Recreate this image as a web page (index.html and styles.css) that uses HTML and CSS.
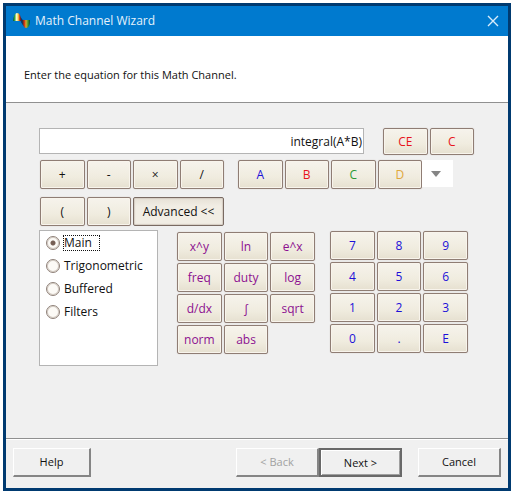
FILE: index.html
```html
<!DOCTYPE html>
<html lang="en">
<head>
<meta charset="utf-8">
<meta name="viewport" content="width=device-width, initial-scale=1">
<title>Math Channel Wizard</title>
<link rel="stylesheet" href="styles.css">
</head>
<body>
<div class="window">
  <header class="titlebar">
    <svg class="logo" viewBox="0 0 18 18" aria-hidden="true">
      <defs>
        <linearGradient id="bands">
          <stop offset="0" stop-color="#123c34"/>
          <stop offset=".2" stop-color="#2fa53c"/>
          <stop offset=".45" stop-color="#fffbd8"/>
          <stop offset=".65" stop-color="#f0d040"/>
          <stop offset=".85" stop-color="#c82418"/>
          <stop offset="1" stop-color="#4a1c28"/>
        </linearGradient>
        <linearGradient id="bands2">
          <stop offset="0" stop-color="#1a2c34"/>
          <stop offset=".3" stop-color="#d03418"/>
          <stop offset=".5" stop-color="#d8a830"/>
          <stop offset=".75" stop-color="#3c9a30"/>
          <stop offset="1" stop-color="#10402c"/>
        </linearGradient>
      </defs>
      <path d="M7 6Q9 8 9 10L11 13" fill="none" stroke="#0c3468" stroke-width="2"/>
      <path d="M0 9Q1 1 4 1Q8 1 8 9Z" fill="url(#bands)"/>
      <path d="M9 8H17Q17 16 13 16Q10 16 9 8Z" fill="url(#bands2)"/>
    </svg>
    <h1 class="title">Math Channel Wizard</h1>
    <button class="close" type="button" aria-label="Close">
      <svg viewBox="0 0 12 12" aria-hidden="true"><path d="M1 1L11 11M11 1L1 11"/></svg>
    </button>
  </header>
  <div class="intro"><label for="equation">Enter the equation for this Math Channel.</label></div>
  <main class="content">
    <div class="row entry">
      <input id="equation" class="equation" type="text" value="integral(A*B)">
      <div class="keys pair">
        <button type="button" class="key red">CE</button>
        <button type="button" class="key red">C</button>
      </div>
    </div>
    <div class="row operators">
      <div class="keys four">
        <button type="button" class="key">+</button>
        <button type="button" class="key">-</button>
        <button type="button" class="key">×</button>
        <button type="button" class="key">/</button>
      </div>
      <div class="channels">
        <div class="keys four">
          <button type="button" class="key blue">A</button>
          <button type="button" class="key red">B</button>
          <button type="button" class="key green">C</button>
          <button type="button" class="key gold">D</button>
        </div>
        <button type="button" class="more" aria-label="More channels">
          <svg viewBox="0 0 10 6" aria-hidden="true"><path d="M0 0H10L5 6Z"/></svg>
        </button>
      </div>
    </div>
    <div class="row brackets">
      <div class="keys four">
        <button type="button" class="key">(</button>
        <button type="button" class="key">)</button>
        <button type="button" class="key pressed">Advanced &lt;&lt;</button>
      </div>
    </div>
    <div class="row pads">
      <div class="groups" role="radiogroup" aria-label="Function group">
        <label class="option"><input type="radio" name="group" checked><span class="focused">Main</span></label>
        <label class="option"><input type="radio" name="group"><span>Trigonometric</span></label>
        <label class="option"><input type="radio" name="group"><span>Buffered</span></label>
        <label class="option"><input type="radio" name="group"><span>Filters</span></label>
      </div>
      <div class="keys three functions">
        <button type="button" class="key">x^y</button>
        <button type="button" class="key">ln</button>
        <button type="button" class="key">e^x</button>
        <button type="button" class="key">freq</button>
        <button type="button" class="key">duty</button>
        <button type="button" class="key">log</button>
        <button type="button" class="key">d/dx</button>
        <button type="button" class="key">∫</button>
        <button type="button" class="key">sqrt</button>
        <button type="button" class="key">norm</button>
        <button type="button" class="key">abs</button>
      </div>
      <div class="keys three digits">
        <button type="button" class="key">7</button>
        <button type="button" class="key">8</button>
        <button type="button" class="key">9</button>
        <button type="button" class="key">4</button>
        <button type="button" class="key">5</button>
        <button type="button" class="key">6</button>
        <button type="button" class="key">1</button>
        <button type="button" class="key">2</button>
        <button type="button" class="key">3</button>
        <button type="button" class="key">0</button>
        <button type="button" class="key">.</button>
        <button type="button" class="key">E</button>
      </div>
    </div>
  </main>
  <footer class="actions">
    <button type="button" class="action help">Help</button>
    <button type="button" class="action" disabled>&lt; Back</button>
    <button type="button" class="action default">Next &gt;</button>
    <button type="button" class="action cancel">Cancel</button>
  </footer>
</div>
</body>
</html>
```
FILE: styles.css
```css
* {
  box-sizing: border-box;
}

body {
  margin: 0;
  min-height: 100vh;
  padding: 3px 4px 6px 3px;
  display: flex;
  background: #fff;
  color: #111;
  font: 12px/16px "Open Sans", "Noto Sans", sans-serif;
}

button,
input {
  font: inherit;
  color: inherit;
  margin: 0;
}

.window {
  flex: 1;
  display: flex;
  flex-direction: column;
  border: 3px solid #003a70;
  background: #f0f0f0;
}

.titlebar {
  display: flex;
  align-items: center;
  height: 30px;
  padding: 0 7px;
  background: #007acf;
  color: #e4f1fb;
}

.logo {
  width: 18px;
  height: 18px;
  margin-right: 4px;
}

.title {
  flex: 1;
  margin: 0;
  font-size: 12px;
  font-weight: 400;
}

.close {
  display: flex;
  padding: 2px;
  border: 0;
  background: none;
}

.close svg {
  width: 12px;
  height: 12px;
  fill: none;
  stroke: #d8ecfa;
  stroke-width: 1.4;
}

.intro {
  height: 67px;
  padding: 31px 18px 0;
  border-bottom: 1px solid #909090;
  background: #fff;
  font-size: 11px;
}

.content {
  flex: 1;
  padding: 25px 34px 32px 33px;
}

.row {
  display: flex;
}

.entry {
  gap: 19px;
}

.equation {
  flex: 1;
  min-width: 0;
  height: 26px;
  padding: 0 1px;
  border: 1px solid #b4b4b4;
  background: #fff;
  text-align: right;
}

.keys {
  display: grid;
  grid-auto-rows: 29px;
  gap: 2px;
}

.pair {
  width: 91px;
  grid-template-columns: repeat(2, 1fr);
  grid-auto-rows: 27px;
}

.four {
  width: 184px;
  grid-template-columns: repeat(4, 1fr);
}

.three {
  width: 138px;
  grid-template-columns: repeat(3, 1fr);
}

.key {
  padding: 0;
  border: 1px solid #8f7d74;
  border-radius: 2px;
  background: linear-gradient(#f6f3ec, #f0ecdf 60%, #e6e0d0);
  box-shadow: inset 0 0 0 1px #f8f4ec, 0 0 1px #b9ada6;
}

.pressed {
  grid-column: span 2;
  border-color: #796a62;
  background: linear-gradient(#e6e1d6, #f1ede4 30%, #f1ede4);
  box-shadow: inset 0 0 1px 1px #d5ccc2;
}

.red {
  color: #e8141c;
}

.blue,
.digits .key {
  color: #1c10d8;
}

.green {
  color: #2c9a34;
}

.gold {
  color: #e0a83c;
}

.functions .key {
  color: #8c1090;
}

.operators {
  gap: 14px;
  padding-left: 1px;
  margin-top: 5px;
}

.channels {
  display: flex;
}

.more {
  display: flex;
  justify-content: center;
  align-items: center;
  width: 31px;
  height: 27px;
  padding: 0 3px 0 0;
  border: 0;
  background: #fff;
}

.more svg {
  width: 10px;
  height: 6px;
  fill: #858585;
}

.brackets {
  padding-left: 1px;
  margin-top: 8px;
}

.pads {
  align-items: flex-start;
  margin-top: 4px;
}

.groups {
  width: 119px;
  height: 136px;
  padding: 0 6px;
  border: 1px solid #b4b4b4;
  background: #fff;
}

.option {
  display: flex;
  align-items: center;
  gap: 3px;
  height: 23px;
}

.option input {
  appearance: none;
  flex: none;
  width: 14px;
  height: 14px;
  border: 1px solid #8f8179;
  border-radius: 50%;
  background: #fcfaf6;
  box-shadow: inset 0 0 0 1px #d6cec6;
}

.option input:checked {
  background: radial-gradient(circle, #765f55 0 2px, #fcfaf6 3px);
}

.option span {
  padding: 0 1px;
}

.option .focused {
  padding: 0 7px 0 0;
  border: 1px dotted #111;
  line-height: 14px;
}

.functions {
  margin-left: 19px;
  margin-top: 2px;
}

.digits {
  margin-left: 15px;
  margin-top: 1px;
}

.actions {
  display: flex;
  height: 50px;
  padding: 9px 7px 11px;
  border-top: 1px solid #909090;
  box-shadow: inset 0 1px #fff;
}

.action {
  width: 83px;
  padding: 0;
  border: solid;
  border-width: 1px 2px 2px 1px;
  border-color: #fff #858585 #858585 #fff;
  background: #f0f0f0;
  font-size: 11px;
}

.action:disabled {
  color: #a2a2a2;
}

.help {
  width: 78px;
  margin-right: auto;
}

.default {
  border: 2px solid #696969;
  box-shadow: inset 1px 1px #fff, inset -1px -1px #a0a0a0;
}

.cancel {
  margin-left: 16px;
}
```
